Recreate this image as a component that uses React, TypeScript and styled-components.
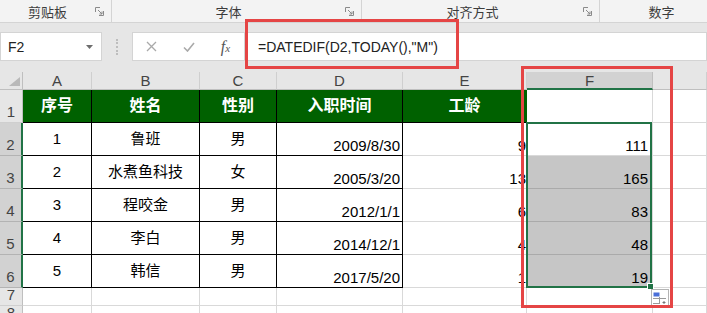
import { Fragment } from 'react';
import styled, { createGlobalStyle } from 'styled-components';

const GREEN = '#217346';
const HEAD_GREEN = '#006100';
const RED = '#e54545';
const GRID = '#d9d9d9';

const GlobalStyle = createGlobalStyle`
  *, *::before, *::after { box-sizing: border-box; }
  html, body { margin: 0; padding: 0; background: #fff; }
  body { font-family: 'Liberation Sans', 'Noto Sans CJK SC', sans-serif; }
`;

const Page = styled.div`
  position: relative;
  width: 707px;
  height: 313px;
  overflow: hidden;
  background: #e6e6e6;
`;

/* ribbon group captions */
const RibbonFoot = styled.div`
  display: flex;
  height: 23px;
  background: #f3f3f3;
  border-bottom: 1px solid #d4d4d4;
  overflow: hidden;
`;

const RibbonGroup = styled.div<{ $width: number }>`
  flex: 0 0 ${(p) => p.$width}px;
  display: grid;
  grid-template-columns: 1fr 16px;
  align-items: center;
  border-right: 1px solid #d4d4d4;
  font-family: 'Noto Sans CJK SC', sans-serif;
  font-size: 13px;
  color: #3c3c3c;

  .label {
    text-align: center;
  }
`;

const Launcher = () => (
  <svg width="9" height="9" viewBox="0 0 9 9">
    <path d="M0.5 5V0.5H5M8.5 4v4.5H4" stroke="#8a8a8a" fill="none" />
    <path d="M3 3l4 4M7 4.5V7H4.5" stroke="#8a8a8a" fill="none" />
  </svg>
);

/* formula bar */
const FormulaBar = styled.div`
  display: flex;
  align-items: flex-start;
  height: 49px;
  padding-top: 9px;
`;

const NameBox = styled.div`
  flex: 0 0 102px;
  height: 29px;
  display: flex;
  align-items: center;
  justify-content: space-between;
  padding: 0 8px 0 7px;
  background: #fff;
  border: 1px solid #d4d4d4;
  font-size: 14px;
  color: #222;
`;

const Grip = styled.div`
  flex: 0 0 30px;
  height: 29px;
  display: flex;
  align-items: center;
  justify-content: center;

  &::before {
    content: '';
    height: 16px;
    border-left: 2px dotted #bdbdbd;
  }
`;

const ButtonBox = styled.div`
  flex: 0 0 111px;
  height: 29px;
  display: grid;
  grid-template-columns: repeat(3, 37px);
  align-items: center;
  justify-items: center;
  background: #fff;
  border: 1px solid #d4d4d4;
  border-right: none;
`;

const Fx = styled.span`
  font-family: 'Liberation Serif', serif;
  font-style: italic;
  font-size: 16px;
  color: #555;

  small {
    font-size: 11px;
  }
`;

const FormulaInput = styled.div`
  flex: 1;
  height: 29px;
  display: flex;
  align-items: center;
  padding-left: 13px;
  background: #fff;
  border: 1px solid #d4d4d4;
  font-size: 14px;
  color: #222;
  white-space: nowrap;
`;

/* sheet */
const Sheet = styled.div`
  display: grid;
  grid-template-columns: 23px 69px 108px 77px 126px 124px 126px 1fr;
  grid-template-rows: 18px repeat(6, 33px) 18px 18px;
  background: #fff;
`;

const Corner = styled.div`
  display: flex;
  align-items: flex-end;
  justify-content: flex-end;
  padding: 0 2px 3px 0;
  background: #e6e6e6;
  border-right: 1px solid #bfbfbf;
  border-bottom: 1px solid #bfbfbf;
`;

const ColHead = styled.div<{ $active?: boolean }>`
  display: flex;
  align-items: center;
  justify-content: center;
  background: ${(p) => (p.$active ? '#d2d2d2' : '#e6e6e6')};
  border-right: 1px solid ${(p) => (p.$active ? '#bfbfbf' : '#cfcfcf')};
  border-bottom: ${(p) => (p.$active ? `2px solid ${GREEN}` : '1px solid #bfbfbf')};
  font-size: 15px;
  color: #444;
`;

const RowHead = styled.div<{ $active?: boolean }>`
  display: flex;
  align-items: flex-end;
  justify-content: center;
  padding-bottom: 1px;
  background: ${(p) => (p.$active ? '#d2d2d2' : '#e6e6e6')};
  border-right: ${(p) => (p.$active ? `2px solid ${GREEN}` : '1px solid #bfbfbf')};
  border-bottom: 1px solid ${(p) => (p.$active ? '#b3b3b3' : '#cfcfcf')};
  font-size: 15px;
  line-height: 18px;
  color: #444;
`;

type Align = 'center' | 'right';

const Cell = styled.div<{
  $align?: Align;
  $bottom?: boolean;
  $fill?: string;
  $rb?: string;
  $bb?: string;
  $head?: boolean;
  $pad?: number;
}>`
  position: relative;
  display: flex;
  align-items: ${(p) => (p.$bottom ? 'flex-end' : 'center')};
  justify-content: ${(p) => (p.$align === 'right' ? 'flex-end' : 'center')};
  padding: 0 ${(p) => p.$pad ?? 3}px 0 3px;
  background: ${(p) => p.$fill ?? '#fff'};
  border-right: 1px solid ${(p) => p.$rb ?? GRID};
  border-bottom: 1px solid ${(p) => p.$bb ?? GRID};
  font-size: ${(p) => (p.$head ? 16 : 15)}px;
  font-weight: ${(p) => (p.$head ? 700 : 400)};
  color: ${(p) => (p.$head ? '#fff' : '#000')};
  line-height: 18px;
  white-space: nowrap;
`;

const Selection = styled.div`
  position: absolute;
  left: -1px;
  top: -1px;
  width: calc(100% + 1px);
  height: ${5 * 33 + 1}px;
  border: 2px solid ${GREEN};
  z-index: 3;
  pointer-events: none;
`;

const FillHandle = styled.div`
  position: absolute;
  right: -4px;
  bottom: -4px;
  width: 7px;
  height: 7px;
  background: ${GREEN};
  border: 1px solid #fff;
`;

const QuickAnalysis = styled.div`
  position: absolute;
  left: calc(100% + 1px);
  top: calc(100% + 3px);
  width: 18px;
  height: 17px;
  background: #fff;
  border: 1px solid #b4b4b4;
  display: flex;
  align-items: center;
  justify-content: center;
`;

const Callout = styled.div<{ $x: number; $y: number; $w: number; $h: number }>`
  position: absolute;
  left: ${(p) => p.$x}px;
  top: ${(p) => p.$y}px;
  width: ${(p) => p.$w}px;
  height: ${(p) => p.$h}px;
  border: 3px solid ${RED};
  z-index: 5;
  pointer-events: none;
`;

const headers = ['序号', '姓名', '性别', '入职时间', '工龄'];

const rows = [
  ['1', '鲁班', '男', '2009/8/30', '9', '111'],
  ['2', '水煮鱼科技', '女', '2005/3/20', '13', '165'],
  ['3', '程咬金', '男', '2012/1/1', '6', '83'],
  ['4', '李白', '男', '2014/12/1', '4', '48'],
  ['5', '韩信', '男', '2017/5/20', '1', '19'],
];

const App = () => {
  return (
    <Page>
      <GlobalStyle />

      <RibbonFoot>
        <RibbonGroup $width={112}>
          <span className="label">剪贴板</span>
          <Launcher />
        </RibbonGroup>
        <RibbonGroup $width={250}>
          <span className="label">字体</span>
          <Launcher />
        </RibbonGroup>
        <RibbonGroup $width={238}>
          <span className="label">对齐方式</span>
          <Launcher />
        </RibbonGroup>
        <RibbonGroup $width={140}>
          <span className="label">数字</span>
          <Launcher />
        </RibbonGroup>
      </RibbonFoot>

      <FormulaBar>
        <NameBox>
          <span>F2</span>
          <svg width="7" height="4" viewBox="0 0 7 4">
            <path d="M0 0h7L3.5 4z" fill="#6d6d6d" />
          </svg>
        </NameBox>
        <Grip />
        <ButtonBox>
          <svg width="11" height="11" viewBox="0 0 11 11">
            <path d="M1 1l9 9M10 1l-9 9" stroke="#a9a9a9" strokeWidth="1.3" />
          </svg>
          <svg width="12" height="10" viewBox="0 0 12 10">
            <path d="M1 5.5l3.5 3.5L11 1" stroke="#a9a9a9" strokeWidth="1.6" fill="none" />
          </svg>
          <Fx>
            f<small>x</small>
          </Fx>
        </ButtonBox>
        <FormulaInput>=DATEDIF(D2,TODAY(),"M")</FormulaInput>
      </FormulaBar>

      <Sheet>
        <Corner>
          <svg width="11" height="9" viewBox="0 0 11 9">
            <path d="M11 0v9H0z" fill="#b9b9b9" />
          </svg>
        </Corner>
        {['A', 'B', 'C', 'D', 'E', 'F', 'G'].map((c) => (
          <ColHead key={c} $active={c === 'F'}>
            {c !== 'G' ? c : ''}
          </ColHead>
        ))}

        <RowHead>1</RowHead>
        {headers.map((h, i) => (
          <Cell
            key={h}
            $head
            $fill={HEAD_GREEN}
            $rb={i < 4 ? '#000' : HEAD_GREEN}
            $bb="#000"
          >
            {h}
          </Cell>
        ))}
        <Cell />
        <Cell />

        {rows.map((r, ri) => (
          <Fragment key={r[0]}>
            <RowHead $active>{ri + 2}</RowHead>
            <Cell $rb="#000" $bb="#000">{r[0]}</Cell>
            <Cell $rb="#000" $bb="#000">{r[1]}</Cell>
            <Cell $rb="#000" $bb="#000">{r[2]}</Cell>
            <Cell $align="right" $bottom $pad={2} $rb="#000" $bb="#000">
              {r[3]}
            </Cell>
            <Cell $align="right" $bottom $pad={0}>
              {r[4]}
            </Cell>
            <Cell
              $align="right"
              $bottom
              $pad={4}
              $fill={ri === 0 ? '#fff' : '#c6c6c6'}
              $bb={ri === 0 ? GRID : '#aaaaaa'}
            >
              {r[5]}
              {ri === 0 && (
                <Selection>
                  <FillHandle />
                  <QuickAnalysis>
                    <svg width="14" height="12" viewBox="0 0 14 12">
                      <rect x="0.5" y="0.5" width="6" height="4" fill="#4a6fd8" />
                      <path d="M0 6.5h13M6.5 5v7M0 11.5h7" stroke="#9a9a9a" fill="none" />
                      <path d="M11 9v3M9.5 10.5h3" stroke="#777" />
                    </svg>
                  </QuickAnalysis>
                </Selection>
              )}
            </Cell>
            <Cell />
          </Fragment>
        ))}

        {[7, 8].map((n) => (
          <Fragment key={n}>
            <RowHead>{n}</RowHead>
            {[0, 1, 2, 3, 4, 5, 6].map((c) => (
              <Cell key={c} />
            ))}
          </Fragment>
        ))}
      </Sheet>

      <Callout $x={245} $y={19} $w={214} $h={50} />
      <Callout $x={521} $y={66} $w={152} $h={242} />
    </Page>
  );
};

export default App;
